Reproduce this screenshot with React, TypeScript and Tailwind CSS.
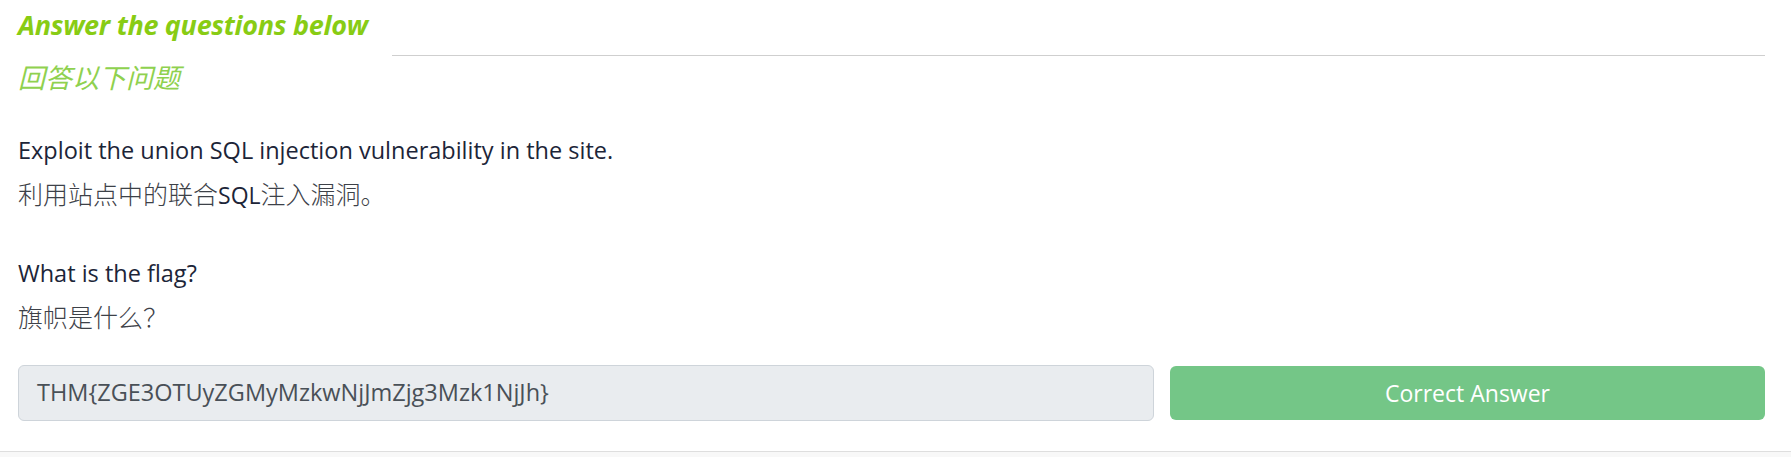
import React from 'react';

const sans = { fontFamily: '"Open Sans", "Noto Sans CJK SC", sans-serif' };

const Question: React.FC<{ en: string; zh: React.ReactNode; className?: string }> = ({ en, zh, className }) => (
  <div className={className}>
    <p className="text-[23.5px] leading-[32px] text-[#1c2538]">{en}</p>
    <p className="mt-[11px] text-[25px] leading-[32px] text-[#3d4148] font-['Noto_Sans_CJK_SC',sans-serif] font-light">
      {zh}
    </p>
  </div>
);

export default function App() {
  return (
    <div className="w-full h-[457px] bg-white flex flex-col" style={sans}>
      <div className="h-[451px] pl-[18px] pr-[26px] pt-[7px]">
        {/* Heading */}
        <div className="flex items-start">
          <h5 className="text-[27px] leading-[36px] font-bold italic text-[#88cc14] tracking-[-0.3px]">
            Answer the questions below
          </h5>
          <div className="flex-1 ml-[24px] mt-[48px] border-t-[1.5px] border-[#cfcfcf]" />
        </div>
        <p className="mt-[3px] text-[27px] leading-[36px] italic text-[#8fd14f] font-['Noto_Sans_CJK_SC',sans-serif]">
          回答以下问题
        </p>

        <Question
          className="mt-[39px]"
          en="Exploit the union SQL injection vulnerability in the site."
          zh={
            <>
              利用站点中的联合<span className="font-['Open_Sans',sans-serif] font-normal text-[#1c2538] text-[23px]">SQL</span>注入漏洞。
            </>
          }
        />
        <Question className="mt-[46px]" en="What is the flag?" zh="旗帜是什么？" />

        {/* Answer row */}
        <div className="mt-[33px] flex items-center gap-[16px]">
          <div className="flex-1 h-[56px] flex items-center pl-[18px] pr-[12px] rounded-[6px] border border-[#ced4da] bg-[#e9ecef] text-[23.5px] text-[#495057]">
            THM{'{'}ZGE3OTUyZGMyMzkwNjJmZjg3Mzk1NjJh{'}'}
          </div>
          <button className="w-[595px] h-[54px] rounded-[6px] bg-[#74c687] text-white text-[23px]">
            Correct Answer
          </button>
        </div>
      </div>
      <div className="flex-1 border-t border-[#dedede] bg-[#f8f8f8]" />
    </div>
  );
}
